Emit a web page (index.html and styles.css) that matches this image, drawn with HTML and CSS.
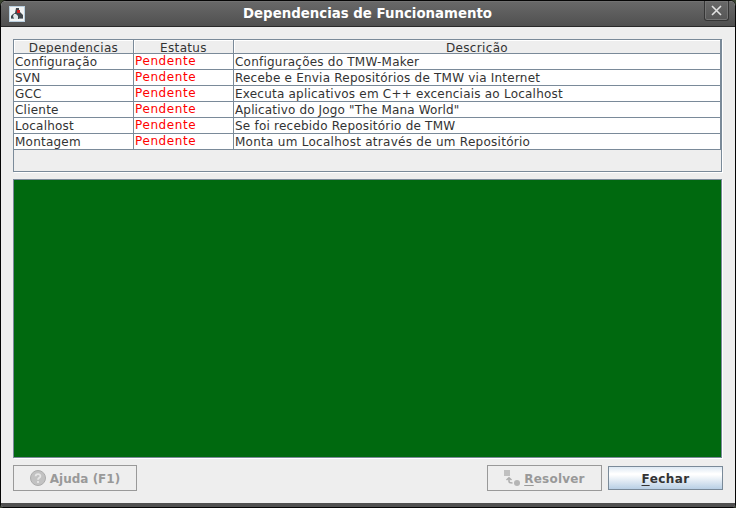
FILE: index.html
```html
<!DOCTYPE html>
<html lang="pt">
<head>
<meta charset="utf-8">
<title>Dependencias de Funcionamento</title>
<link rel="stylesheet" href="styles.css">
</head>
<body>
<div class="window">
  <header class="titlebar">
    <svg class="app-icon" width="16" height="16" viewBox="0 0 16 16">
      <rect width="16" height="16" fill="#b9cfdf"/>
      <rect x="1" y="1" width="14" height="14" fill="#f1f3f4"/>
      <path d="M7 2h3v3l2 2 2 2v3l-2 1H4l-2-1v-2l2-2 2-1z" fill="#41474c"/>
      <path d="M5 8h2l2 2v3H5l-1-3z" fill="#e3e7e9"/>
      <rect x="8" y="4" width="3" height="3" fill="#d81e20"/>
      <path d="M2 12h3v1H2zM10 12h4v1h-4z" fill="#858c91"/>
    </svg>
    <h1>Dependencias de Funcionamento</h1>
    <div class="close">
      <svg width="11" height="11" viewBox="0 0 11 11"><path d="M1 1l9 9M10 1l-9 9" stroke="#e2e2e2" stroke-width="1.6"/></svg>
    </div>
  </header>
  <main>
    <section class="table-pane">
      <div class="row head"><div>Dependencias</div><div>Estatus</div><div>Descrição</div></div>
      <div class="row"><div>Configuração</div><div class="status">Pendente</div><div>Configurações do TMW-Maker</div></div>
      <div class="row"><div>SVN</div><div class="status">Pendente</div><div>Recebe e Envia Repositórios de TMW via Internet</div></div>
      <div class="row"><div>GCC</div><div class="status">Pendente</div><div>Executa aplicativos em C++ excenciais ao Localhost</div></div>
      <div class="row"><div>Cliente</div><div class="status">Pendente</div><div class="quoted">Aplicativo do Jogo "The Mana World"</div></div>
      <div class="row"><div>Localhost</div><div class="status">Pendente</div><div>Se foi recebido Repositório de TMW</div></div>
      <div class="row"><div>Montagem</div><div class="status">Pendente</div><div class="last">Monta um Localhost através de um Repositório</div></div>
    </section>
    <section class="console"></section>
    <footer>
      <div class="button disabled help">
        <svg width="16" height="16" viewBox="0 0 16 16"><circle cx="8" cy="8" r="7.5" fill="#c2c2c2" stroke="#acacac"/><path d="M5.6 6.2C5.7 3.4 10.5 3.4 10.4 6.2C10.3 7.8 8 7.9 8 9.8M8 11v2" fill="none" stroke="#e6e6e6" stroke-width="1.8"/></svg>
        <span>Ajuda (F1)</span>
      </div>
      <div class="button disabled resolve">
        <svg width="16" height="16" viewBox="0 0 16 16"><rect width="6" height="6" fill="#c0c0c0"/><circle cx="13" cy="13" r="3" fill="#b5b5b5"/><path d="M5 8v3.5q0 1.5 3.5 1.5M2.5 10L5 7.7L7.5 10" fill="none" stroke="#adadad" stroke-width="1.5"/></svg>
        <span><u>R</u>esolver</span>
      </div>
      <div class="button primary"><span><u>F</u>echar</span></div>
    </footer>
  </main>
</div>
</body>
</html>
```
FILE: styles.css
```css
* { box-sizing: border-box; }
body { margin: 0; background: #39432f; font: 12px/14px "DejaVu Sans", sans-serif; color: #333; }
.window { width: 736px; height: 508px; display: flex; flex-direction: column; border: 1px solid #050505; border-radius: 6px 6px 3px 3px; background: #eee; overflow: hidden; }
.titlebar { height: 26px; flex: none; display: flex; align-items: flex-start; background: linear-gradient(#7b7b7b 0, #686868 1px, #505050 25px, #292929 25px); color: #fff; }
.app-icon { margin: 5px 0 0 8px; }
h1 { flex: 1; margin: 5px 0 0 6px; text-align: center; font-size: 13.33px; line-height: 16px; }
.close { width: 25px; height: 20px; margin-right: 6px; border: 1px solid #353535; border-top: 0; border-radius: 0 0 3px 3px; box-shadow: inset 0 0 0 1px #747474; display: flex; justify-content: center; padding-top: 4px; }
main { height: 476px; flex: none; padding: 12px 12px 0; background: #eee; }
.window::after { content: ""; flex: 1; background: #505050; }
.table-pane { height: 133px; border: 1px solid #7a8a99; box-shadow: 1px 1px #fff; width: 709px; }
.row { display: grid; grid-template-columns: 120px 100px 487px; height: 16px; letter-spacing: .22px; }
.row div { border-right: 1px solid #7a8a99; border-bottom: 1px solid #7a8a99; background: #fff; padding-left: 1px; line-height: 16px; white-space: nowrap; overflow: hidden; }
.row .status { color: #f00; line-height: 15px; letter-spacing: .6px; }
.row .quoted { letter-spacing: .15px; }
.row .last { letter-spacing: .27px; }
.head { height: 14px; }
.row.head div { background: #eee; box-shadow: inset 1px 1px #fff; text-align: center; line-height: 16px; padding: 0; letter-spacing: .33px; }
.console { width: 709px; height: 279px; margin-top: 7px; background: #00690f; border: 1px solid #7a8a99; box-shadow: 1px 1px #fff; }
footer { display: flex; align-items: center; height: 26px; margin-top: 7px; }
.button { display: flex; align-items: center; justify-content: center; font-weight: bold; font-size: 12px; }
.button span { padding-top: 1px; }
.disabled { height: 26px; color: #999; border: 1px solid #999; gap: 4px; }
.help { width: 124px; }
.resolve { width: 115px; margin-left: 350px; letter-spacing: .22px; }
.primary { width: 115px; height: 24px; margin-left: 6px; border: 1px solid #7a8a99; background: linear-gradient(#dde8f3 0, #fff 30%, #fff 35%, #b8cfe5 100%); letter-spacing: .4px; }
u { text-decoration-thickness: 1px; text-underline-offset: 2px; }
```
